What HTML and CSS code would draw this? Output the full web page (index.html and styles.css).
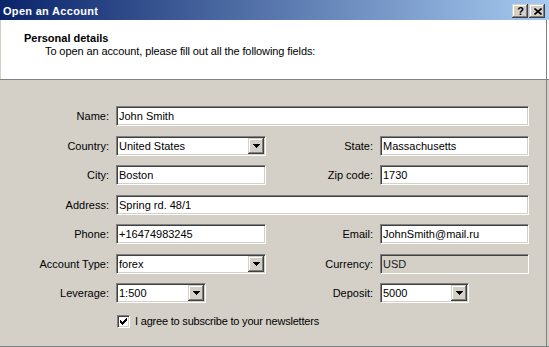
FILE: index.html
```html
<!DOCTYPE html>
<html>
<head>
<meta charset="utf-8">
<link rel="stylesheet" href="styles.css">
</head>
<body>
<div class="window">
  <div class="titlebar">
    <span class="title">Open an Account</span>
    <div class="tbuttons">
      <div class="tbtn help">?</div>
      <div class="tbtn close">
        <svg width="8" height="7" viewBox="0 0 8 7"><path d="M0.5 0.5L7.5 6.5M7.5 0.5L0.5 6.5" stroke="#000" stroke-width="1.6" fill="none"/></svg>
      </div>
    </div>
  </div>
  <div class="header">
    <div class="h-title">Personal details</div>
    <div class="h-sub">To open an account, please fill out all the following fields:</div>
  </div>
  <div class="content">
    <div class="form">
      <div class="lbl">Name:</div>
      <div class="field wide">John Smith</div>

      <div class="lbl">Country:</div>
      <div class="field select"><span class="val">United States</span><span class="dd"><svg width="7" height="4" viewBox="0 0 7 4" shape-rendering="crispEdges"><path d="M0 0h7v1h-1v1h-1v1h-1v1h-1v-1h-1v-1h-1v-1h-1z" fill="#000"/></svg></span></div>
      <div class="lbl">State:</div>
      <div class="field">Massachusetts</div>

      <div class="lbl">City:</div>
      <div class="field">Boston</div>
      <div class="lbl">Zip code:</div>
      <div class="field">1730</div>

      <div class="lbl">Address:</div>
      <div class="field wide">Spring rd. 48/1</div>

      <div class="lbl">Phone:</div>
      <div class="field">+16474983245</div>
      <div class="lbl">Email:</div>
      <div class="field">JohnSmith@mail.ru</div>

      <div class="lbl">Account Type:</div>
      <div class="field select"><span class="val">forex</span><span class="dd"><svg width="7" height="4" viewBox="0 0 7 4" shape-rendering="crispEdges"><path d="M0 0h7v1h-1v1h-1v1h-1v1h-1v-1h-1v-1h-1v-1h-1z" fill="#000"/></svg></span></div>
      <div class="lbl">Currency:</div>
      <div class="field disabled">USD</div>

      <div class="lbl">Leverage:</div>
      <div class="field select short"><span class="val">1:500</span><span class="dd"><svg width="7" height="4" viewBox="0 0 7 4" shape-rendering="crispEdges"><path d="M0 0h7v1h-1v1h-1v1h-1v1h-1v-1h-1v-1h-1v-1h-1z" fill="#000"/></svg></span></div>
      <div class="lbl">Deposit:</div>
      <div class="field select short2"><span class="val">5000</span><span class="dd"><svg width="7" height="4" viewBox="0 0 7 4" shape-rendering="crispEdges"><path d="M0 0h7v1h-1v1h-1v1h-1v1h-1v-1h-1v-1h-1v-1h-1z" fill="#000"/></svg></span></div>

      <div class="check-row">
        <span class="checkbox"><svg width="7" height="7" viewBox="0 0 7 7" shape-rendering="crispEdges"><path d="M6 0h1v3h-1v1h-1v1h-1v1h-1v1h-1v-1h-1v-1h-1v-3h1v1h1v1h1v-1h1v-1h1v-1h1z" fill="#000"/></svg></span>
        <span class="check-text">I agree to subscribe to your newsletters</span>
      </div>
    </div>
  </div>
</div>
</body>
</html>
```
FILE: styles.css
```css
* { box-sizing: border-box; margin: 0; padding: 0; }
html, body { width: 549px; height: 347px; overflow: hidden; }
body {
  font-family: "Liberation Sans", Arial, sans-serif;
  font-size: 11px;
  color: #000;
  background: #d4d0c8;
}
.window {
  display: flex;
  flex-direction: column;
  height: 347px;
}
.titlebar {
  height: 20px;
  flex: none;
  background: linear-gradient(to right, #0a246a, #a6caf0);
  display: flex;
  align-items: flex-start;
  justify-content: space-between;
  padding: 4px 4px 0 3px;
}
.title {
  color: #fff;
  font-weight: bold;
  line-height: 13px;
  margin-top: 1px;
  letter-spacing: 0.3px;
}
.tbuttons { display: flex; gap: 1px; }
.tbtn {
  width: 16px;
  height: 14px;
  background: #d4d0c8;
  box-shadow: inset -1px -1px #404040, inset 1px 1px #d4d0c8, inset -2px -2px #808080, inset 2px 2px #fff;
  display: flex;
  align-items: center;
  justify-content: center;
  font-weight: bold;
  font-size: 11px;
  line-height: 12px;
}
.tbtn.help { padding-left: 1px; }
.tbtn.close svg { display: block; margin-left: 1px; }

.header {
  height: 60px;
  flex: none;
  background: #fff;
  border-bottom: 1px solid #808080;
  padding: 12px 0 0 24px;
  line-height: 13px;
  box-shadow: inset 1px 0 #d4d0c8, inset -2px 0 #fff, inset -3px 0 #808080;
}
.h-title { font-weight: bold; }
.h-sub { padding-left: 21px; letter-spacing: -0.1px; }

.content {
  flex: 1;
  padding-top: 26px;
  box-shadow: inset 0 -1px #808080, inset -2px 0 #d4d0c8, inset -3px 0 #808080;
}
.form {
  display: grid;
  grid-template-columns: 109px 150px 100px 149px;
  grid-auto-rows: 20px;
  column-gap: 7px;
  row-gap: 9.5px;
}
.lbl {
  text-align: right;
  align-self: center;
  white-space: nowrap;
}
.field {
  height: 20px;
  background: #fff;
  border-top: 1px solid #808080;
  border-left: 1px solid #808080;
  border-bottom: 1px solid #fff;
  border-right: 1px solid #fff;
  box-shadow: inset 1px 1px #404040, inset -1px -1px #d4d0c8;
  padding: 0 2px 0 2px;
  display: flex;
  align-items: center;
  white-space: nowrap;
  overflow: hidden;
}
.field.wide { grid-column: 2 / 5; }
.field.disabled { background: #d4d0c8; color: #222; }
.field.select { padding: 1px 1px 1px 2px; align-items: stretch; }
.field.short { width: 90px; }
.field.short2 { width: 89px; }
.val { flex: 1; display: flex; align-items: center; }
.dd {
  width: 16px;
  flex: none;
  background: #d4d0c8;
  box-shadow: inset -1px -1px #404040, inset 1px 1px #d4d0c8, inset -2px -2px #808080, inset 2px 2px #fff;
  display: flex;
  align-items: center;
  justify-content: center;
}
.dd svg { display: block; }

.check-row {
  grid-column: 2 / 5;
  display: flex;
  align-items: center;
  margin-top: 2px;
  height: 13px;
  padding-left: 1px;
}
.checkbox {
  width: 13px;
  height: 13px;
  background: #fff;
  border-top: 1px solid #808080;
  border-left: 1px solid #808080;
  border-bottom: 1px solid #fff;
  border-right: 1px solid #fff;
  box-shadow: inset 1px 1px #404040, inset -1px -1px #d4d0c8;
  display: flex;
  align-items: center;
  justify-content: center;
}
.checkbox svg { display: block; }
.check-text { margin-left: 5px; white-space: nowrap; letter-spacing: -0.2px; }
```
